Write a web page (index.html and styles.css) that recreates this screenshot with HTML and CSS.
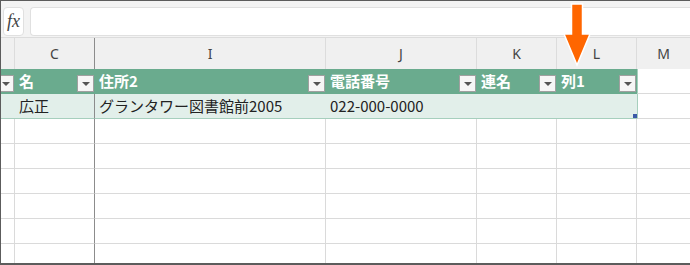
FILE: index.html
```html
<!DOCTYPE html>
<html lang="ja">
<head>
    <meta charset="UTF-8">
    <meta name="viewport" content="width=device-width, initial-scale=1.0">
    <title>テーブル 列1</title>
    <link rel="stylesheet" href="styles.css">
</head>
<body>

    <div class="window">
        <!-- 数式バー -->
        <div class="formula-bar">
            <div class="fx">fx</div>
            <div class="formula-input"></div>
        </div>

        <div class="sheet">
            <!-- 列見出し -->
            <div class="row col-heads">
                <div class="cell"></div>
                <div class="cell frozen">C</div>
                <div class="cell">I</div>
                <div class="cell">J</div>
                <div class="cell">K</div>
                <div class="cell">L</div>
                <div class="cell">M</div>
            </div>

            <!-- テーブルの見出し行 -->
            <div class="row table-head">
                <div class="cell"><span class="drop"></span></div>
                <div class="cell">名<span class="drop"></span></div>
                <div class="cell">住所2<span class="drop"></span></div>
                <div class="cell">電話番号<span class="drop"></span></div>
                <div class="cell">連名<span class="drop"></span></div>
                <div class="cell">列1<span class="drop"></span></div>
                <div class="cell blank"></div>
            </div>

            <!-- データ行 -->
            <div class="row table-data">
                <div class="cell"></div>
                <div class="cell frozen">広正</div>
                <div class="cell">グランタワー図書館前2005</div>
                <div class="cell">022-000-0000</div>
                <div class="cell"></div>
                <div class="cell last"><span class="handle"></span></div>
                <div class="cell blank"></div>
            </div>

            <div class="row"><div class="cell"></div><div class="cell frozen"></div><div class="cell"></div><div class="cell"></div><div class="cell"></div><div class="cell"></div><div class="cell"></div></div>
            <div class="row"><div class="cell"></div><div class="cell frozen"></div><div class="cell"></div><div class="cell"></div><div class="cell"></div><div class="cell"></div><div class="cell"></div></div>
            <div class="row"><div class="cell"></div><div class="cell frozen"></div><div class="cell"></div><div class="cell"></div><div class="cell"></div><div class="cell"></div><div class="cell"></div></div>
            <div class="row"><div class="cell"></div><div class="cell frozen"></div><div class="cell"></div><div class="cell"></div><div class="cell"></div><div class="cell"></div><div class="cell"></div></div>
            <div class="row"><div class="cell"></div><div class="cell frozen"></div><div class="cell"></div><div class="cell"></div><div class="cell"></div><div class="cell"></div><div class="cell"></div></div>
            <div class="row"><div class="cell"></div><div class="cell frozen"></div><div class="cell"></div><div class="cell"></div><div class="cell"></div><div class="cell"></div><div class="cell"></div></div>
        </div>

        <!-- 列1を指す矢印 -->
        <svg class="arrow" width="32" height="66" viewBox="0 0 32 66">
            <path d="M9.5 2 H20.5 V32 H28 L15 63 L2 32 H9.5 Z" fill="#ff6600" stroke="#fff" stroke-width="1.5" stroke-linejoin="miter"/>
        </svg>
    </div>

</body>
</html>
```

FILE: styles.css
```css
body {
    margin: 0;
    background-color: #fff;
    font-family: "Noto Sans CJK JP", "Noto Sans", sans-serif;
}

.window {
    position: relative;
    width: 690px;
    height: 265px;
    box-sizing: border-box;
    border-top: 1px solid #5c5c5c;
    border-left: 1px solid #5c5c5c;
    border-bottom: 2px solid #5c5c5c;
    overflow: hidden;
    background-color: #fff;
}

/* 数式バー */
.formula-bar {
    display: flex;
    gap: 6px;
    height: 37px;
    box-sizing: border-box;
    padding: 6px 0 1px 2px;
    background-color: #f3f3f3;
    border-bottom: 1px solid #dcdcdc;
}

.fx {
    width: 21px;
    box-sizing: border-box;
    border: 1px solid #e0e0e0;
    border-radius: 4px;
    background-color: #fff;
    font-family: "Liberation Serif", serif;
    font-style: italic;
    font-size: 18px;
    color: #444;
    display: flex;
    align-items: center;
    justify-content: center;
}

.formula-input {
    flex: 1;
    border: 1px solid #e0e0e0;
    border-right: none;
    border-radius: 4px 0 0 4px;
    background-color: #fff;
}

/* シート */
.row {
    display: grid;
    grid-template-columns: 14px 80px 231px 151px 80px 80px 54px;
    height: 25px;
}

.cell {
    position: relative;
    box-sizing: border-box;
    border-right: 1px solid #dadada;
    border-bottom: 1px solid #dadada;
    font-size: 15px;
    line-height: 24px;
    padding-left: 4px;
    color: #222;
    white-space: nowrap;
}

.cell.frozen {
    border-right-color: #8c8c8c;
}

/* 列見出し */
.col-heads {
    height: 31px;
    background-color: #f0f0f0;
}

.col-heads .cell {
    font-family: "Noto Sans", sans-serif;
    font-size: 14px;
    text-align: center;
    padding-left: 0;
    line-height: 32px;
    color: #444;
    border-right-color: #dcdcdc;
    border-bottom-color: #d0d0d0;
}

.col-heads .cell.frozen {
    border-right-color: #8c8c8c;
}

/* テーブル見出し */
.table-head .cell {
    background-color: #6aab8e;
    border-right: none;
    border-bottom: none;
    color: #fff;
    font-weight: bold;
    line-height: 23px;
    padding-left: 4px;
}

.table-head .cell.blank {
    background-color: #fff;
    border-bottom: 1px solid #dadada;
    border-left: 1px solid #a6cfbd;
}

.drop {
    position: absolute;
    right: 1px;
    bottom: 2px;
    width: 17px;
    height: 17px;
    box-sizing: border-box;
    border: 1px solid #a0a0a0;
    background-color: #f6f6f6;
}

.drop::after {
    content: "";
    position: absolute;
    left: 4px;
    top: 6px;
    border-left: 4px solid transparent;
    border-right: 4px solid transparent;
    border-top: 4px solid #555;
}

/* データ行 */
.table-data .cell {
    background-color: #e2efea;
    border-right: none;
    border-bottom: 1px solid #a6cfbd;
}

.table-data .cell.frozen {
    border-right: 1px solid #8c8c8c;
}

.table-data .cell.blank {
    background-color: #fff;
    border-left: 1px solid #a6cfbd;
    border-bottom-color: #dadada;
}

.handle {
    position: absolute;
    right: 0;
    bottom: 0;
    width: 4px;
    height: 4px;
    background-color: #3c5aa8;
}

/* 矢印 */
.arrow {
    position: absolute;
    left: 561px;
    top: 1px;
}
```
